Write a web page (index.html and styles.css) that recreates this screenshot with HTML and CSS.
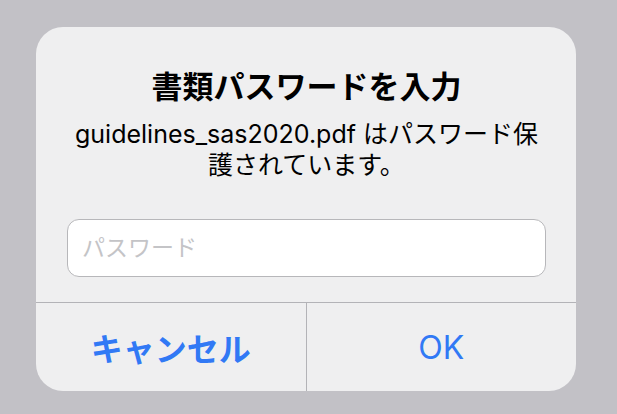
FILE: index.html
```html
<!DOCTYPE html>
<html lang="ja">
<head>
	<meta charset="UTF-8">
	<title>書類パスワードを入力</title>
	<link rel="stylesheet" href="styles.css">
</head>
<body>
	<div class="alert">
		<div class="content">
			<h1 class="title">書類パスワードを入力</h1>
			<p class="message">guidelines_sas2020.pdf はパスワード保護されています。</p>
			<input class="field" type="password" placeholder="パスワード">
		</div>
		<div class="actions">
			<button class="cancel">キャンセル</button>
			<button class="ok">OK</button>
		</div>
	</div>
</body>
</html>
```

FILE: styles.css
```css
/*common*/
*{
	margin: 0;
	padding: 0;
	box-sizing: border-box;
}
html, body{
	height: 100%;
}
body{
	background-color: #c2c1c6;
	padding: 27px 0 0 36px;
	font-family: Inter, "Noto Sans CJK JP", sans-serif;
	color: #000;
}

/*alert*/
.alert{
	width: 540px;
	background-color: #efeff0;
	border-radius: 27px;
	overflow: hidden;
}
.content{
	padding: 40px 30px 25px 31px;
	text-align: center;
}
.title{
	font-size: 31px;
	line-height: 40px;
	font-weight: 700;
}
.message{
	margin-top: 12px;
	padding: 0 6px;
	font-size: 25px;
	line-height: 31px;
}
.field{
	display: block;
	width: 100%;
	height: 58px;
	margin-top: 38px;
	padding: 0 14px;
	border: 1px solid #b7b7ba;
	border-radius: 12px;
	background-color: #fff;
	font-family: inherit;
	font-size: 23px;
	outline: none;
}
.field::placeholder{
	color: #c4c4c7;
}

/*buttons*/
.actions{
	display: flex;
	border-top: 1px solid #b3b3b7;
}
.actions button{
	flex: 1;
	height: 88px;
	border: none;
	background: none;
	font-family: inherit;
	font-size: 32px;
	color: #3179f5;
}
.actions .cancel{
	font-weight: 700;
	border-right: 1px solid #b3b3b7;
}
```
